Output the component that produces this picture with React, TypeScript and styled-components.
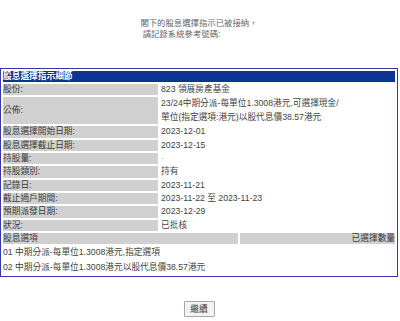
import styled, { createGlobalStyle } from "styled-components";

const GlobalStyle = createGlobalStyle`
  body {
    margin: 0;
    background: #ffffff;
    font-family: "Liberation Sans", "Noto Sans CJK TC", sans-serif;
    font-size: 8.7px;
  }
`;

const details = [
  { label: "股份:", value: ["823 領展房產基金"] },
  {
    label: "公佈:",
    value: [
      "23/24中期分派-每單位1.3008港元,可選擇現金/",
      "單位(指定選項:港元)以股代息價38.57港元",
    ],
  },
  { label: "股息選擇開始日期:", value: ["2023-12-01"] },
  { label: "股息選擇截止日期:", value: ["2023-12-15"] },
  { label: "持股量:", value: ["-"], faint: true },
  { label: "持股類別:", value: ["持有"] },
  { label: "記錄日:", value: ["2023-11-21"] },
  { label: "截止過戶期間:", value: ["2023-11-22 至 2023-11-23"] },
  { label: "預期派發日期:", value: ["2023-12-29"] },
  { label: "狀況:", value: ["已批核"] },
];

const options = [
  "01 中期分派-每單位1.3008港元,指定選項",
  "02 中期分派-每單位1.3008港元以股代息價38.57港元",
];

function App() {
  return (
    <Page>
      <GlobalStyle />
      <Message>
        <MessageText>
          閣下的股息選擇指示已被接納，
          <br />
          &nbsp;請記錄系統參考號碼:
        </MessageText>
      </Message>
      <DetailTable>
        <tbody>
          <tr>
            <HeaderCell colSpan={2}>股息選擇指示細節</HeaderCell>
          </tr>
          {details.map((row) => (
            <tr key={row.label}>
              <LabelCell>{row.label}</LabelCell>
              <ValueCell $faint={row.faint}>
                {row.value.map((line) => (
                  <ValueLine key={line} $tall={row.value.length > 1}>
                    {line}
                  </ValueLine>
                ))}
              </ValueCell>
            </tr>
          ))}
          <tr>
            <OptionCell colSpan={2}>
              <OptionHead>
                <OptionHeadCell>股息選項</OptionHeadCell>
                <OptionHeadCell $right>已選擇數量</OptionHeadCell>
              </OptionHead>
            </OptionCell>
          </tr>
          {options.map((opt) => (
            <tr key={opt}>
              <OptionCell colSpan={2}>
                <OptionLine>{opt}</OptionLine>
              </OptionCell>
            </tr>
          ))}
        </tbody>
      </DetailTable>
      <Actions>
        <ContinueButton>繼續</ContinueButton>
      </Actions>
    </Page>
  );
}

const Page = styled.div`
  width: 398px;
  padding-top: 18px;
`;

const Message = styled.div`
  text-align: center;
  height: 50px;
`;

const MessageText = styled.div`
  display: inline-block;
  text-align: left;
  color: #666666;
  font-size: 8.4px;
  line-height: 10.5px;
`;

const DetailTable = styled.table`
  width: 398px;
  border: 1px solid #3737a8;
  border-collapse: separate;
  border-spacing: 2px;
  color: #3c3c3c;
  font-size: 8.7px;
`;

const HeaderCell = styled.td`
  background: #0b3494;
  color: #ffffff;
  font-weight: bold;
  height: 11px;
  line-height: 11px;
  padding: 0;
`;

const LabelCell = styled.td`
  width: 155px;
  background: #d0d0d0;
  padding: 0;
  line-height: 11.33px;
  vertical-align: middle;
  white-space: nowrap;
`;

const ValueCell = styled.td<{ $faint?: boolean }>`
  padding: 0 0 0 1px;
  height: 11.33px;
  color: ${(p) => (p.$faint ? "#c8c8c8" : "#444444")};
  white-space: nowrap;
`;

const ValueLine = styled.div<{ $tall?: boolean }>`
  line-height: ${(p) => (p.$tall ? "13.5px" : "11.33px")};
`;

const OptionCell = styled.td`
  padding: 0;
`;

const OptionHead = styled.div`
  display: grid;
  grid-template-columns: 235px 1fr;
  gap: 2px;
`;

const OptionHeadCell = styled.div<{ $right?: boolean }>`
  background: #d0d0d0;
  line-height: 11.33px;
  text-align: ${(p) => (p.$right ? "right" : "left")};
`;

const OptionLine = styled.div`
  line-height: 13px;
  color: #444444;
`;

const Actions = styled.div`
  display: flex;
  justify-content: center;
  margin-top: 24px;
`;

const ContinueButton = styled.button`
  width: 31px;
  height: 16px;
  padding: 0;
  border: 1px solid #a8a8a8;
  border-radius: 1px;
  background: #f3f3f3;
  color: #333333;
  font-family: "Liberation Sans", "Noto Sans CJK TC", sans-serif;
  font-size: 8.7px;
  line-height: 14px;
`;

export default App;
